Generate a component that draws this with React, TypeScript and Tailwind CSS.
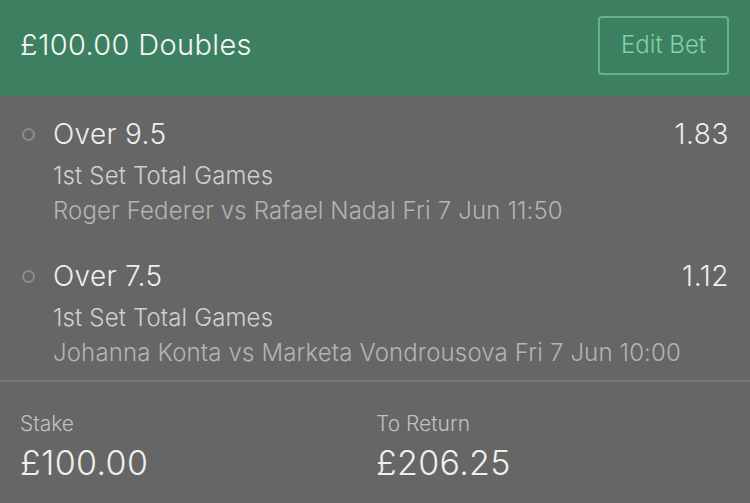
import React from 'react'

interface Selection {
  name: string
  market: string
  event: string
  odds: string
}

const selections: Selection[] = [
  {
    name: 'Over 9.5',
    market: '1st Set Total Games',
    event: 'Roger Federer vs Rafael Nadal Fri 7 Jun 11:50',
    odds: '1.83',
  },
  {
    name: 'Over 7.5',
    market: '1st Set Total Games',
    event: 'Johanna Konta vs Marketa Vondrousova Fri 7 Jun 10:00',
    odds: '1.12',
  },
]

const SelectionRow: React.FC<{ s: Selection }> = ({ s }) => (
  <div className="flex">
    <div className="w-[53px] h-[40px] flex items-center pl-[22px]">
      <span className="block w-[13px] h-[13px] rounded-full border-2 border-[#8c8c8c]" />
    </div>
    <div className="flex-1 min-w-0">
      <div className="flex justify-between h-[40px] leading-[40px] text-[28px] font-[350] tracking-[0.012em] text-[#eeeeee]">
        <span>{s.name}</span>
        <span className="pr-[21px] tracking-[0.02em]">{s.odds}</span>
      </div>
      <div className="mt-[5px] h-[34px] leading-[34px] text-[24px] font-[350] tracking-[0.006em] text-[#d0d0d0]">{s.market}</div>
      <div className="h-[36px] leading-[36px] text-[24px] font-[350] tracking-[0.006em] text-[#b4b4b4] whitespace-nowrap">{s.event}</div>
    </div>
  </div>
)

export default function App() {
  return (
    <div
      className="w-[750px] h-[503px] bg-[#666666] overflow-hidden"
      style={{ fontFamily: 'Inter, "Noto Sans", sans-serif' }}
    >
      <div className="h-[96px] bg-[#3d8061] flex items-center justify-between pl-[20px] pr-[21px]">
        <div className="mb-[6px] h-[40px] leading-[40px] text-[29px] font-[350] tracking-[0.012em] text-[#f4f7f5]">£100.00 Doubles</div>
        <button className="mb-[6px] w-[131px] h-[59px] rounded-[4px] border-2 border-[#62b389] text-[24px] font-[350] text-[#7fd3a5]">
          Edit Bet
        </button>
      </div>

      <div className="pt-[18px] pb-[9px] flex flex-col gap-[27px]">
        {selections.map((s, i) => (
          <SelectionRow key={i} s={s} />
        ))}
      </div>

      <div className="border-t-2 border-[#767676] grid grid-cols-[356px_1fr] pt-[28px] pl-[20px]">
        <div>
          <div className="h-[28px] leading-[28px] text-[21px] font-[350] text-[#c0c0c0]">Stake</div>
          <div className="mt-[3px] h-[44px] leading-[44px] text-[34px] font-[350] tracking-[0.01em] text-[#efefef]">£100.00</div>
        </div>
        <div>
          <div className="h-[28px] leading-[28px] text-[21px] font-[350] text-[#c0c0c0]">To Return</div>
          <div className="mt-[3px] h-[44px] leading-[44px] text-[34px] font-[350] tracking-[0.01em] text-[#efefef]">£206.25</div>
        </div>
      </div>
    </div>
  )
}
